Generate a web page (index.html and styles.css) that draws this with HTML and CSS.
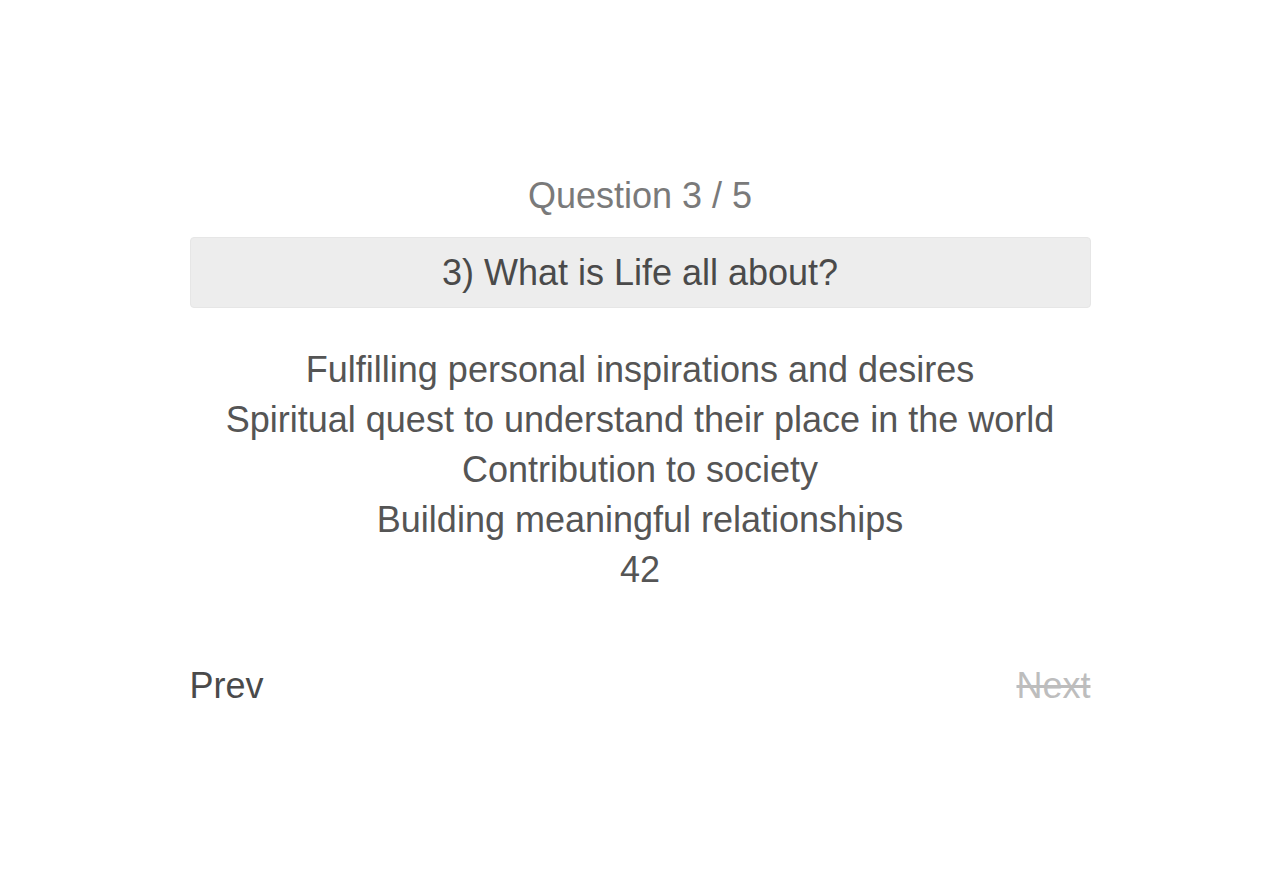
FILE: index.html
```html
<!DOCTYPE html>
<html lang="en">
<head>
<meta charset="utf-8">
<title>Quiz</title>
<link rel="stylesheet" href="styles.css">
</head>
<body>
<main class="quiz">
  <h1 class="counter">Question 3 / 5</h1>
  <div class="question">3) What is Life all about?</div>
  <ul class="answers">
    <li>Fulfilling personal inspirations and desires</li>
    <li>Spiritual quest to understand their place in the world</li>
    <li>Contribution to society</li>
    <li>Building meaningful relationships</li>
    <li>42</li>
  </ul>
  <nav class="pager">
    <a class="prev">Prev</a>
    <a class="next disabled">Next</a>
  </nav>
</main>
</body>
</html>
```

FILE: styles.css
```css
html, body {
  margin: 0;
  padding: 0;
  background: #ffffff;
}
body {
  font-family: "Liberation Sans", Arial, Helvetica, sans-serif;
  font-size: 36px;
  color: #555555;
}
.quiz {
  width: 901px;
  margin: 0 auto;
  padding-top: 171px;
  display: flex;
  flex-direction: column;
}
.counter {
  margin: 0;
  font-size: 36px;
  font-weight: normal;
  line-height: 50px;
  text-align: center;
  color: #7a7a7a;
}
.question {
  margin-top: 16px;
  height: 71px;
  box-sizing: border-box;
  display: flex;
  align-items: center;
  justify-content: center;
  background: #ededed;
  border: 1px solid #e6e6e6;
  border-radius: 4px;
  color: #4a4a4a;
  line-height: 50px;
}
.answers {
  list-style: none;
  margin: 37px 0 0;
  padding: 0;
  text-align: center;
  line-height: 50px;
}
.pager {
  margin-top: 66px;
  display: flex;
  justify-content: space-between;
  line-height: 50px;
}
.prev {
  color: #4a4a4a;
}
.next.disabled {
  color: #bdbdbd;
  text-decoration: line-through;
}
```
